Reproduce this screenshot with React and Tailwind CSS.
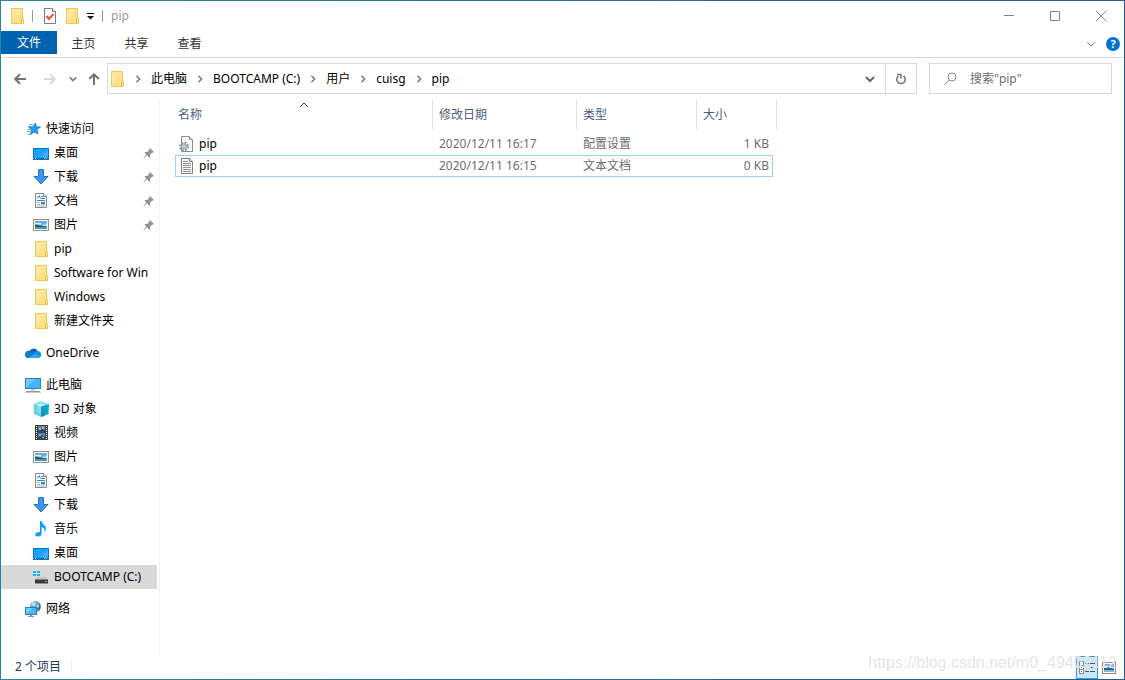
import React, { useState } from "react";

const FolderIcon = () => (
  <svg viewBox="0 0 16 16" className="w-4 h-4 shrink-0">
    <path d="M2.500 .5h11v10h1v5h-12z" fill="#ffe796" stroke="#efc955" />
    <path d="M3 1h10v10h-1.500v4H3z" fill="#ffe08a" />
    <path d="M3 1h10L3 13z" fill="#ffe9a2" />
    <path d="M12.500 15.500v-4l1-1.500" fill="none" stroke="#e3b93c" />
  </svg>
);

const CheckDocIcon = () => (
  <svg viewBox="0 0 16 16" className="w-4 h-4 shrink-0">
    <path d="M2.500 .5h8l3 3v12h-11z" fill="#fff" stroke="#7d7d7d" />
    <path d="M10.500 .5v3h3" fill="#eee" stroke="#7d7d7d" />
    <path d="M4.500 8l2.500 3 4.500-5" fill="none" stroke="#e8582a" strokeWidth="2" />
  </svg>
);

const StarIcon = () => (
  <svg viewBox="0 0 16 16" className="w-4 h-4 shrink-0">
    <path
      d="M10.500 2l.8 3.800 4.200.2-3.600 2.600 1 4.400-3.600-2.100-4 2.800 1.400-4.800L3.500 6l4.600-.3z"
      fill="#1f9bef"
      stroke="#1779bd"
      strokeWidth=".8"
    />
    <path d="M4 3.500h4M3 5.500h3M2.500 8.500h3M2 10.500h3M2.500 13.500h2" stroke="#3c9ddc" strokeWidth=".8" />
  </svg>
);

const DesktopIcon = () => (
  <svg viewBox="0 0 16 16" className="w-4 h-4 shrink-0">
    <rect x=".5" y="3.500" width="15" height="11" fill="#1aa1ff" stroke="#0b76c5" />
    <path d="M7 12L15 4v8z" fill="#3aafff" />
    <path d="M1 13.500h14" stroke="#075c9f" />
    <path d="M2 13.500h1m8 0h1m1 0h1" stroke="#fff" />
  </svg>
);

const DownloadIcon = () => (
  <svg viewBox="0 0 16 16" className="w-4 h-4 shrink-0">
    <path d="M5.500 .5h5v7h4.500L8 15 1 7.500h4.500z" fill="#3a97e8" stroke="#2877bd" />
  </svg>
);

const DocumentIcon = () => (
  <svg viewBox="0 0 16 16" className="w-4 h-4 shrink-0">
    <path d="M2.500 .5h8l3 3v11h-11z" fill="#fff" stroke="#8a8a8a" />
    <path d="M10.500 .5v3h3" fill="#eee" stroke="#8a8a8a" />
    <path d="M4 5.500l2-3 1.500 3M8 3.500h2M8 5.500h4M4 7.500h8" fill="none" stroke="#2b88cf" />
    <path d="M4 9.500h3M4 11.500h3M4 13h8" stroke="#8fa1b0" strokeWidth=".8" />
    <path d="M8 9h4v2.500H8z" fill="#2b88cf" />
  </svg>
);

const PictureIcon = () => (
  <svg viewBox="0 0 16 16" className="w-4 h-4 shrink-0">
    <rect x=".5" y="2.500" width="15" height="11" fill="#fff" stroke="#929292" />
    <path d="M2 4h12v8H2z" fill="#a9d8f7" />
    <path d="M2 4h12v2.500L9 8 2 5.500z" fill="#6eaee8" />
    <path d="M3 6h5v1.500H3z" fill="#e5f4fb" />
    <path d="M2 7.500c4-.2 6 1.500 12 2V10H2z" fill="#2d6554" />
    <path d="M2 10h12v2H2z" fill="#4b94bd" />
  </svg>
);

const CloudIcon = () => (
  <svg viewBox="0 0 16 16" className="w-4 h-4 shrink-0">
    <path d="M4.500 6a4.500 4.500 0 0 1 8.300.3L8 12H2.500A3 3 0 0 1 4.500 6z" fill="#0864b8" />
    <path d="M9 7.500a4 4 0 0 1 4-1.500 3.500 3.500 0 0 1 1.500 6.500H7z" fill="#1490df" />
    <path d="M.2 10A3.300 3.300 0 0 1 5 6.500l6 2.500-7 4H3a3 3 0 0 1-2.800-3z" fill="#0d7ad4" />
    <path d="M3 13l7-4.500 5 3.300A3 3 0 0 1 13 13z" fill="#28a8ea" />
  </svg>
);

const ComputerIcon = () => (
  <svg viewBox="0 0 16 16" className="w-4 h-4 shrink-0">
    <rect x=".5" y="1.500" width="15" height="10" fill="#43b5fa" stroke="#3181b5" />
    <path d="M1 11L10 2H1z" fill="#70caff" />
    <path d="M6 12h4v1.500H6z" fill="#b5c3cc" />
    <path d="M1 14.500h14" stroke="#8c9aa5" />
    <path d="M0 15.500h16" stroke="#c3cbd1" />
  </svg>
);

const CubeIcon = () => (
  <svg viewBox="0 0 16 16" className="w-4 h-4 shrink-0">
    <path d="M.5 3L8 0l8 3-4 1.500L8 3.500l-4 1z" fill="#8fe3ee" />
    <path d="M.5 3L8 5.500V16l-7-3z" fill="#62d0e0" />
    <path d="M16 3L8 5.500V16l7.500-3z" fill="#08a6c8" />
    <path d="M4 4.200L8 3l4 1.200v7.300L8 13l-4-1.500z" fill="#c5f3f7" opacity=".35" />
    <path d="M8 5.500l4-1.200V14.400L8 16z" fill="#0789b0" opacity=".7" />
  </svg>
);

const VideoIcon = () => (
  <svg viewBox="0 0 16 16" className="w-4 h-4 shrink-0">
    <path d="M2 0h13v15H2z" fill="#3f3f3f" />
    <path d="M5 1h7v6H5zM5 8h7v6H5z" fill="#4c89db" />
    <path d="M5 5l3-2 4 2v2H5zM5 12l4-2 3 2v2H5z" fill="#284a75" />
    <path d="M6 3h2v2H6zM9 2h2v2H9zM6 10h2v1H6zM9 12h2v1H9z" fill="#e9b542" />
    <path d="M3.500 1v13M13.500 1v13" stroke="#fff" strokeDasharray="1 1" />
  </svg>
);

const MusicIcon = () => (
  <svg viewBox="0 0 16 16" className="w-4 h-4 shrink-0">
    <path
      d="M7 0h1.600c.2 3 4.400 4 4.400 7.500 0 1.500-.6 2.700-1.400 3.500.5-2.500-.8-4.200-3-5v7c0 1.500-1.500 2.500-3.300 2.500S2 14.700 2.200 13.500c.2-1.500 2.300-2.700 4.800-2.300z"
      fill="#129bf3"
    />
  </svg>
);

const DriveIcon = () => (
  <svg viewBox="0 0 16 16" className="w-4 h-4 shrink-0">
    <path d="M0 2h3v2H0zM4 2h3v2H4zM0 5h3v2H0zM4 5h3v2H4z" fill="#12b4ee" />
    <path d="M4 8h9l2 3H2z" fill="#c4c8ca" />
    <path d="M2 10.500h13v4H2z" fill="#383c3e" />
    <path d="M12 12h2v1h-2z" fill="#32e052" />
  </svg>
);

const NetworkIcon = () => (
  <svg viewBox="0 0 16 16" className="w-4 h-4 shrink-0">
    <circle cx="10.500" cy="5.500" r="5.500" fill="#6ca2c4" />
    <path d="M7 1.500l3-1 1 3-2 2-3-1zM12 4.500l3-1 .8 3L13 10.500l-2-3z" fill="#b8dbe6" />
    <path d="M14 2A5.500 5.500 0 0 1 13 10.500l-1-3 2-2z" fill="#356e97" />
    <rect x=".5" y="6.500" width="11" height="7" fill="#49b7f5" stroke="#2c7eb2" />
    <path d="M1 13l7-6H1z" fill="#75ccff" />
    <path d="M5 14h2v1H5zM3 15h6v1H3z" fill="#8097a5" />
  </svg>
);

const PinIcon = () => (
  <svg viewBox="0 0 12 12" className="w-3 h-3 shrink-0">
    <path d="M7 1l4 4-1 .7-.8-.2L7 8l.2 1.800-.9.9L4 8.500 1 11.500H.5V11l3-3L1.500 5.800l.9-.9L4 5l2.600-2.400L6.300 1.500z" fill="#8796a0" />
  </svg>
);

const ConfigFileIcon = () => (
  <svg viewBox="0 0 16 16" className="w-4 h-4 shrink-0">
    <path d="M2.500 .5h8l3 3v12h-11z" fill="#f8f8f8" stroke="#8c8c8c" />
    <path d="M10.500 .5v3h3" fill="#e8e8e8" stroke="#8c8c8c" />
    <circle cx="5" cy="10.500" r="4" fill="none" stroke="#8f989d" strokeWidth="2" strokeDasharray="1.800 1.340" />
    <circle cx="5" cy="10.500" r="2.700" fill="#d4dade" stroke="#8f989d" />
    <circle cx="5" cy="10.500" r="1" fill="#fff" stroke="#8f989d" strokeWidth=".7" />
  </svg>
);

const TextFileIcon = () => (
  <svg viewBox="0 0 16 16" className="w-4 h-4 shrink-0">
    <path d="M2.500 .5h8l3 3v12h-11z" fill="#fafafa" stroke="#808080" />
    <path d="M10.500 .5v3h3" fill="#e8e8e8" stroke="#808080" />
    <path d="M4 3.500h5M4 5.500h8M4 7.500h8M4 9.500h8M4 11.500h8M4 13.500h8" stroke="#969696" />
  </svg>
);

const ArrowIcon = ({ className }) => (
  <svg viewBox="0 0 12 12" className={`w-3 h-3 ${className}`} fill="none" stroke="currentColor" strokeWidth="2">
    <path d="M12 6H1.500M6 1.200L1.200 6 6 10.800" />
  </svg>
);

// small chevron, points down unless rotated
const Chevron = ({ className }) => (
  <svg viewBox="0 0 10 10" className={className} fill="none" stroke="currentColor">
    <path d="M1 3l4 4 4-4" />
  </svg>
);

const quickAccess = [
  { name: "桌面", Icon: DesktopIcon, pinned: true },
  { name: "下载", Icon: DownloadIcon, pinned: true },
  { name: "文档", Icon: DocumentIcon, pinned: true },
  { name: "图片", Icon: PictureIcon, pinned: true },
  { name: "pip", Icon: FolderIcon },
  { name: "Software for Win", Icon: FolderIcon },
  { name: "Windows", Icon: FolderIcon },
  { name: "新建文件夹", Icon: FolderIcon },
];

const thisPC = [
  { name: "3D 对象", Icon: CubeIcon },
  { name: "视频", Icon: VideoIcon },
  { name: "图片", Icon: PictureIcon },
  { name: "文档", Icon: DocumentIcon },
  { name: "下载", Icon: DownloadIcon },
  { name: "音乐", Icon: MusicIcon },
  { name: "桌面", Icon: DesktopIcon },
  { name: "BOOTCAMP (C:)", Icon: DriveIcon },
];

const groups = [
  { name: "快速访问", Icon: StarIcon, items: quickAccess },
  { name: "OneDrive", Icon: CloudIcon, items: [] },
  { name: "此电脑", Icon: ComputerIcon, items: thisPC },
  { name: "网络", Icon: NetworkIcon, items: [] },
];

const path = ["此电脑", "BOOTCAMP (C:)", "用户", "cuisg", "pip"];

const files = [
  { id: 1, name: "pip", date: "2020/12/11 16:17", type: "配置设置", size: "1 KB", Icon: ConfigFileIcon },
  { id: 2, name: "pip", date: "2020/12/11 16:15", type: "文本文档", size: "0 KB", Icon: TextFileIcon },
];

const TitleBar = () => (
  <div className="flex items-center h-[30px] pl-2">
    <FolderIcon />
    <span className="w-px h-3 bg-[#9a9a9a] ml-[7px] mr-[9px]" />
    <button aria-label="属性">
      <CheckDocIcon />
    </button>
    <button aria-label="新建文件夹" className="ml-[6px]">
      <FolderIcon />
    </button>
    <button aria-label="自定义快速访问工具栏" className="ml-[6px]">
      <svg viewBox="0 0 9 8" className="w-[9px] h-2">
        <path d="M1 1h7v1H1zM1 4h7L4.500 7.500z" fill="#111" />
      </svg>
    </button>
    <span className="w-px h-3 bg-[#9a9a9a] ml-[7px] mr-2" />
    <h1 className="flex-1 text-[#999]">pip</h1>
    <div className="flex h-full text-[#808080]">
      <button aria-label="最小化" className="w-[46px] flex items-center justify-center">
        <svg viewBox="0 0 10 10" className="w-[10px] h-[10px]" stroke="currentColor">
          <path d="M0 4.500h10" />
        </svg>
      </button>
      <button aria-label="最大化" className="w-[46px] flex items-center justify-center">
        <svg viewBox="0 0 10 10" className="w-[10px] h-[10px]" stroke="currentColor" fill="none">
          <path d="M.5 .5h9v9h-9z" />
        </svg>
      </button>
      <button aria-label="关闭" className="w-[46px] flex items-center justify-center">
        <svg viewBox="0 0 10 10" className="w-[10px] h-[10px]" stroke="currentColor">
          <path d="M0 0l10 10M10 0L0 10" />
        </svg>
      </button>
    </div>
  </div>
);

const Ribbon = () => (
  <div className="flex items-start h-[27px] border-b border-[#d9dadb]">
    <button className="w-14 h-[23px] bg-[#0063b1] text-white">文件</button>
    {["主页", "共享", "查看"].map((tab) => (
      <button key={tab} className="w-[53px] h-[26px] text-[#333]">
        {tab}
      </button>
    ))}
    <div className="ml-auto h-[26px] flex items-center gap-[10px] pr-1">
      <button aria-label="展开功能区" className="text-[#8a8a8a]">
        <Chevron className="w-[10px] h-[10px]" />
      </button>
      <button aria-label="帮助" className="w-[14px] h-[14px] rounded-full bg-[#0072d0] text-white text-[11px] leading-[14px] font-bold">
        ?
      </button>
    </div>
  </div>
);

const AddressBar = () => (
  <div className="flex items-center py-[5px] pl-[13px] pr-3">
    <button aria-label="后退">
      <ArrowIcon className="text-[#737373]" />
    </button>
    <button aria-label="前进" className="ml-[18px]">
      <ArrowIcon className="text-[#d9d9d9] rotate-180" />
    </button>
    <button aria-label="最近浏览的位置" className="ml-[13px] text-[#7a7a7a]">
      <Chevron className="w-2 h-2 stroke-2" />
    </button>
    <button aria-label="上移" className="ml-[11px]">
      <ArrowIcon className="text-[#737373] rotate-90" />
    </button>
    <div className="flex flex-1 items-center h-[31px] ml-[7px] pl-px border border-[#d9d9d9]">
      <FolderIcon />
      <nav aria-label="地址" className="flex flex-1 items-center">
        {path.map((part) => (
          <React.Fragment key={part}>
            <span className="w-[26px] flex justify-center text-[#808080]">
              <Chevron className="w-2 h-2 -rotate-90 stroke-2" />
            </span>
            <a href="#">{part}</a>
          </React.Fragment>
        ))}
      </nav>
      <button aria-label="以前的位置" className="w-[30px] h-full flex items-center justify-center text-[#666]">
        <Chevron className="w-[10px] h-[10px] stroke-2" />
      </button>
      <button
        aria-label="刷新"
        className="w-[31px] h-full flex items-center justify-center border-l border-[#d9d9d9] text-[#777]"
      >
        <svg viewBox="0 0 12 12" className="w-3 h-3" fill="none" stroke="currentColor" strokeWidth="1.600">
          <path d="M8.500 3A4.200 4.200 0 1 1 3.500 3M2 1.500h4V5.500" />
        </svg>
      </button>
    </div>
    <div className="flex items-center w-[183px] h-[31px] ml-3 pl-[14px] border border-[#d9d9d9]">
      <label htmlFor="search" aria-label="搜索">
        <svg viewBox="0 0 13 13" className="w-[13px] h-[13px]" fill="none" stroke="#8a8a8a">
          <circle cx="8" cy="5" r="4" />
          <path d="M5 8L.5 12.500" />
        </svg>
      </label>
      <input
        id="search"
        type="text"
        placeholder={'搜索"pip"'}
        className="flex-1 min-w-0 ml-[13px] bg-transparent outline-none placeholder:text-[#6d6d6d]"
      />
    </div>
  </div>
);

const Sidebar = () => {
  const [selected, setSelected] = useState("BOOTCAMP (C:)");

  return (
    <aside className="w-[159px] shrink-0 pt-[18px] pr-[2px] border-r border-[#f2f2f2] flex flex-col gap-2">
      {groups.map(({ name, Icon, items }) => (
        <ul key={name}>
          <li>
            <button className="w-full h-6 pl-6 flex items-center gap-[5px]">
              <Icon />
              {name}
            </button>
          </li>
          {items.map((item) => (
            <li key={item.name}>
              <button
                onClick={() => setSelected(item.name)}
                className={`w-full h-6 pl-8 pr-[2px] flex items-center gap-[5px] ${
                  selected === item.name ? "bg-[#d9d9d9]" : ""
                }`}
              >
                <item.Icon />
                <span className="flex-1 text-left whitespace-nowrap overflow-hidden">{item.name}</span>
                {item.pinned && <PinIcon />}
              </button>
            </li>
          ))}
        </ul>
      ))}
    </aside>
  );
};

const FileList = () => (
  <main className="flex-1 min-w-0 pl-[15px] pt-px">
    <table className="w-[598px] table-fixed border-collapse">
      <thead>
        <tr className="h-[33px] align-top text-[#4c607a]">
          <th className="w-[258px] p-0 font-normal">
            <button className="relative w-full h-[29px] pl-[3px] text-left border-r border-[#e2e2e2]">
              名称
              <Chevron className="absolute top-0 left-1/2 -translate-x-1/2 w-[10px] h-[10px] rotate-180 text-[#444]" />
            </button>
          </th>
          <th className="w-[144px] p-0 font-normal">
            <button className="w-full h-[29px] pl-[6px] text-left border-r border-[#e2e2e2]">修改日期</button>
          </th>
          <th className="w-[120px] p-0 font-normal">
            <button className="w-full h-[29px] pl-[6px] text-left border-r border-[#e2e2e2]">类型</button>
          </th>
          <th className="p-0 font-normal">
            <div className="flex -mr-1">
              <button className="w-full h-[29px] pl-[6px] text-left border-r border-[#e2e2e2]">大小</button>
            </div>
          </th>
        </tr>
      </thead>
      <tbody>
        {files.map(({ id, name, date, type, size, Icon }) => (
          <tr
            key={id}
            className={`h-[22px] text-[#6d6d6d] ${id === 2 ? "outline outline-[#99d1ff] -outline-offset-1" : ""}`}
          >
            <td className="p-0 pl-1">
              <div className="flex items-center gap-1 text-black">
                <Icon />
                {name}
              </div>
            </td>
            <td className="p-0 pl-[6px]">{date}</td>
            <td className="p-0 pl-[6px]">{type}</td>
            <td className="p-0 pr-1 text-right">{size}</td>
          </tr>
        ))}
      </tbody>
    </table>
  </main>
);

const StatusBar = () => (
  <footer className="relative flex items-center h-6 pl-[14px] pr-1">
    <span className="text-[#1e395b]">2 个项目</span>
    <span className="w-px h-3 ml-[10px] bg-[#ececec]" />
    <button
      aria-label="详细信息"
      className="ml-auto w-[22px] h-[23px] self-end flex items-center justify-center border border-[#26a0da] bg-[#cbe8f6]"
    >
      <svg viewBox="0 0 16 14" className="w-4 h-[14px]" fill="none">
        <path d="M.5 .5h4v4h-4zM.5 4.500h4v4h-4zM.5 8.500h4v4h-4z" fill="#fff" stroke="#8a8a8a" />
        <path d="M6 2.500h4M11 2.500h5M6 6.500h4M11 6.500h5M6 10.500h4M11 10.500h5" stroke="#555" />
        <path d="M2 2h1v1H2z" fill="#3a93d6" />
        <path d="M2 6h1v1H2z" fill="#3a93d6" />
        <path d="M2 10h1v1H2z" fill="#d33" />
      </svg>
    </button>
    <button aria-label="大缩略图" className="w-[22px] h-[23px] self-end flex items-center justify-center">
      <svg viewBox="0 0 14 12" className="w-[14px] h-3">
        <rect x=".5" y=".5" width="13" height="11" fill="#fff" stroke="#8a8a8a" />
        <path d="M2 2h10v8H2z" fill="#79b6ec" />
        <path d="M2 5h4l6 2v1H2z" fill="#2f6257" />
        <path d="M2 4h4v1H2z" fill="#e6f3fb" />
      </svg>
    </button>
    <span className="absolute right-[7px] -top-1 text-base leading-6 text-[#e6e6e6] font-['Liberation_Sans',sans-serif] pointer-events-none">
      https://blog.csdn.net/m0_49402112
    </span>
  </footer>
);

const App = () => {
  return (
    <div className="min-h-screen flex p-px bg-linear-to-r from-[#2a82a9] to-[#2b5791] text-xs leading-4 text-black font-['Noto_Sans','Noto_Sans_CJK_SC',sans-serif]">
      <div className="flex-1 min-w-0 flex flex-col bg-white">
        <TitleBar />
        <Ribbon />
        <AddressBar />
        <div className="flex flex-1">
          <Sidebar />
          <FileList />
        </div>
        <StatusBar />
      </div>
    </div>
  );
};

export default App;
